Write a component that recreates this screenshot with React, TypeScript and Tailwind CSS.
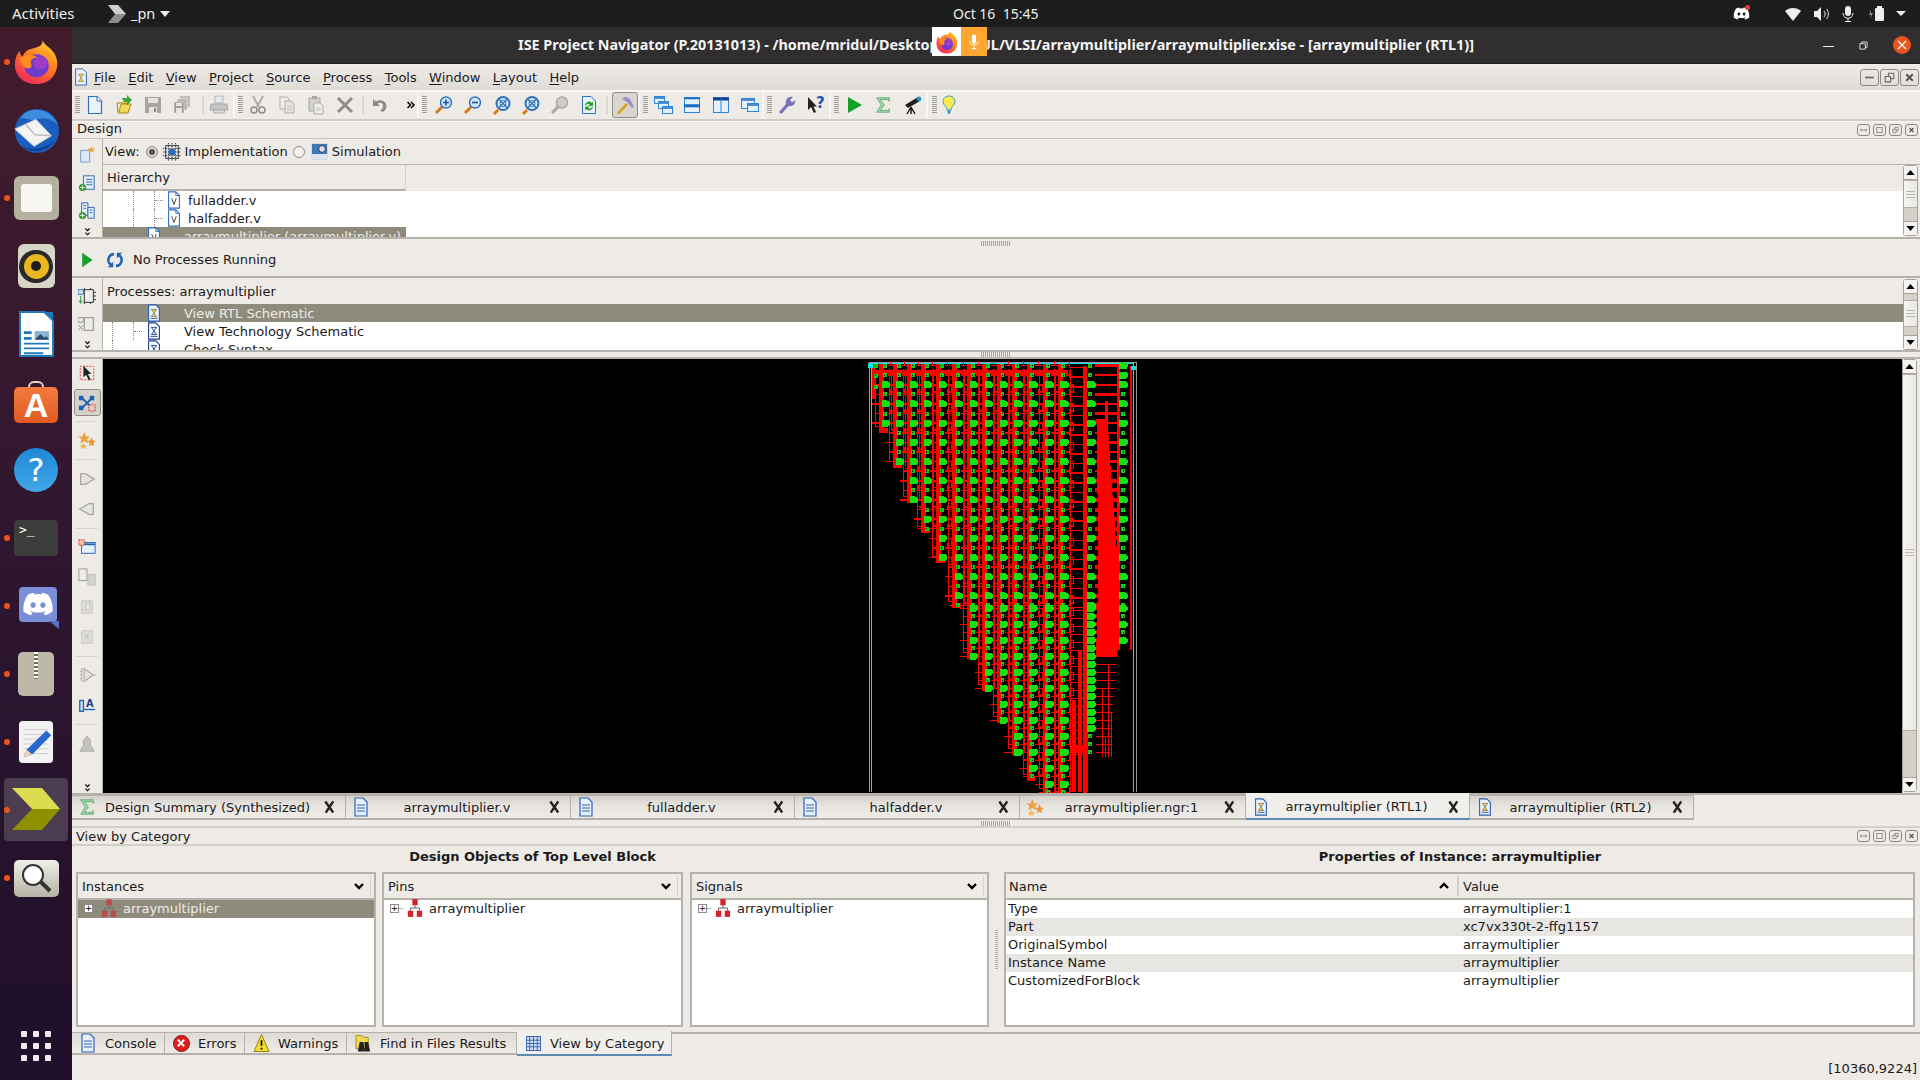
import React from "react";
import { FaDiscord } from "react-icons/fa";

/* ---------- schematic ---------- */
const GATE_COLS = [886, 900, 914, 928, 943, 959, 974, 989, 1004, 1019, 1034, 1050, 1065];
const COL_BOTTOM = [430, 465, 500, 530, 560, 605, 656, 688, 720, 752, 778, 800, 800];
const ROWS: number[] = [];
for (let i = 0; i < 26; i++) ROWS.push(365 + i * 9.6);
for (let k = 0; k < 24; k++) ROWS.push(608 + k * 8);

function BigGate({ x, y }: { x: number; y: number }) {
  return <path d={`M${x - 4} ${y - 3.5}h5q3.5 0 3.5 3.5t-3.5 3.5h-5z`} fill="#14e014" />;
}
function SmallGate({ x, y }: { x: number; y: number }) {
  return (
    <g>
      <rect x={x - 2} y={y - 2} width={4} height={4} fill="#14d014" />
      <rect x={x - 0.7} y={y - 0.7} width={1.4} height={1.4} fill="#002000" />
    </g>
  );
}

function Schematic() {
  const wires: string[] = [];
  const thin: string[] = [];
  const rungs: string[] = [];
  const heavy: string[] = [];
  const gates: React.ReactNode[] = [];

  GATE_COLS.forEach((x, c) => {
    const bottom = Math.min(COL_BOTTOM[c], 792);
    const rowsHere = ROWS.filter((y) => y <= bottom);
    wires.push(`M${x - 4} 363V${bottom}H${x + 2}`);
    thin.push(`M${x - 10} 368V${bottom - 4}H${x - 2}`);
    thin.push(`M${x + 6} 368V${bottom}`);
    rowsHere.forEach((y) => {
      const idx = ROWS.indexOf(y);
      const big = idx % 2 === 0 && idx >= 2;
      if (big) {
        thin.push(`M${x - 14} ${y}H${x - 4}M${x + 3} ${y}H${x + 9}V${y + 7}H${x + 5}`);
        gates.push(<BigGate key={`b${c}-${idx}`} x={x} y={y} />);
      } else {
        thin.push(`M${x - 10} ${y}H${x - 2}M${x + 2} ${y}H${x + 5}V${y - 5}`);
        gates.push(<SmallGate key={`s${c}-${idx}`} x={x - 1} y={y} />);
      }
    });
  });

  // first column of the triangle
  [365, 375, 386].forEach((y) => {
    gates.push(<SmallGate key={`l${y}`} x={876} y={y} />);
    thin.push(`M873 ${y}H882`);
  });

  // stage before the output ladder
  ROWS.forEach((y, idx) => {
    if (y > 757) return;
    const big = y > 600 ? y < 735 : idx % 2 === 0 && idx >= 2;
    thin.push(`M1070 ${y + 2}H1087`);
    if (big) gates.push(<BigGate key={`m${idx}`} x={1092} y={y} />);
    else gates.push(<SmallGate key={`m${idx}`} x={1091} y={y} />);
    if (y < 648) {
      (y > 480 ? heavy : rungs).push(`M1096 ${y}H1120`);
      gates.push(idx % 2 === 0 || idx < 2 ? <BigGate key={`o${idx}`} x={1124} y={y} /> : <SmallGate key={`o${idx}`} x={1124} y={y} />);
    } else {
      thin.push(`M1097 ${y}H${1118 - (y - 648) / 14}`);
      if (idx % 3 === 0) thin.push(`M${1100 + (idx % 5) * 3} ${y}V757`);
    }
  });

  return (
    <svg viewBox="103 359 1800 433" className="w-full h-full block" shapeRendering="crispEdges">
      <path d="M869.5 361V792M1137.5 361V792M869 361.5H1138" stroke="#9a9a9a" fill="none" />
      <path d="M871.5 363V792M1134.5 363V792M871 362.5H1135" stroke="#00e5e5" fill="none" />
      <path d={thin.join("")} stroke="#ff0000" strokeWidth={1.5} fill="none" />
      <path d={rungs.join("")} stroke="#ff0000" strokeWidth={2.4} fill="none" />
      <path d={heavy.join("")} stroke="#ff0000" strokeWidth={4} fill="none" />
      <path d={wires.join("")} stroke="#ff0000" strokeWidth={5} fill="none" />
      <g fill="#ff0000">
        <rect x={873} y={369} width={196} height={4} />
        <rect x={872} y={365} width={3} height={33} />
        <rect x={1084} y={365} width={4} height={428} />
        <rect x={1118} y={365} width={3} height={285} />
        <rect x={1131} y={365} width={2} height={285} />
        <path d="M1097 418H1108L1112 480L1117 545L1121 600V650H1097L1099 560Z" />
        <path d="M1106 400h3v60h-3zM1097 640h21v16h-21z" />
        <rect x={1073} y={700} width={4} height={92} />
        <rect x={1079} y={650} width={4} height={142} />
        <rect x={1071} y={745} width={16} height={8} />
        <rect x={1086} y={650} width={3} height={142} />
      </g>
      {gates}
      <rect x={868} y={362} width={5} height={5} fill="#00e5e5" />
      <rect x={1132} y={365} width={5} height={4} fill="#00e5e5" />
    </svg>
  );
}

/* ---------- small icons ---------- */
function Ic({ children, className = "w-5 h-5" }: { children: React.ReactNode; className?: string }) {
  return (
    <svg viewBox="0 0 20 20" className={`${className} shrink-0`}>
      {children}
    </svg>
  );
}

const IcNew = () => (
  <Ic>
    <path d="M3.5 1.5H12L16.5 6V18.5H3.5Z" fill="#eaf3fc" stroke="#2e6fc0" strokeWidth="1.2" />
    <path d="M12 1.5V6H16.5" fill="#fff" stroke="#2e6fc0" />
  </Ic>
);
const IcOpen = () => (
  <Ic>
    <path d="M3 8L4 18H14L17 9H7L5 17" fill="#f4d758" stroke="#a38a20" />
    <path d="M3 8H8L14 9V6" fill="#ecc53e" stroke="#a38a20" />
    <path d="M8 3H13V0L18 5L13 10V7H10Z" fill="#3aa83a" />
  </Ic>
);
const IcSave = () => (
  <Ic>
    <path d="M2 2H18V18H2Z" fill="#a9a6a1" />
    <path d="M5 3H15V8H5Z" fill="#e6e4e1" />
    <path d="M6 12H14V18H6Z" fill="#e6e4e1" />
    <path d="M11 13H13V17H11Z" fill="#8c8985" />
  </Ic>
);
const IcSaveAll = () => (
  <Ic>
    <path d="M8 1H18V12H8Z" fill="#c2bfba" />
    <path d="M5 4H15V15H5Z" fill="#b5b2ad" stroke="#eeebe7" strokeWidth=".5" />
    <path d="M2 7H12V18H2Z" fill="#a09d98" stroke="#eeebe7" strokeWidth=".5" />
    <path d="M4 13H10V18H4Z" fill="#e6e4e1" />
    <path d="M4 8H10V11H4Z" fill="#e6e4e1" />
  </Ic>
);
const IcPrint = () => (
  <Ic>
    <path d="M6 1H14V8H6Z" fill="#e3e7ee" stroke="#b3b6bb" />
    <path d="M2 9H18L19 15H1Z" fill="#c4c4c4" stroke="#a8a8a8" />
    <path d="M4 15H16L15 18H5Z" fill="#ddd" stroke="#aaa" />
  </Ic>
);
const IcCut = () => (
  <Ic>
    <path d="M5 1L11 12M15 1L9 12" stroke="#aeaca7" strokeWidth="2" fill="none" />
    <circle cx="6" cy="15" r="3" fill="none" stroke="#8e8c88" strokeWidth="1.5" />
    <circle cx="14" cy="15" r="3" fill="none" stroke="#8e8c88" strokeWidth="1.5" />
  </Ic>
);
const IcCopy = () => (
  <Ic>
    <path d="M3 2H10L12 4V14H3Z" fill="#eee" stroke="#b0aeaa" />
    <path d="M8 6H14L17 9V18H8Z" fill="#e8e6e3" stroke="#aeaca8" />
    <path d="M10 11H15M10 13H15M10 15H15" stroke="#c5c3bf" />
  </Ic>
);
const IcPaste = () => (
  <Ic>
    <path d="M3 3H14V16H3Z" fill="#d3d1cd" stroke="#a8a6a2" />
    <path d="M6 1H11V4H6Z" fill="#aaa8a4" />
    <path d="M8 8H14L17 11V19H8Z" fill="#eee" stroke="#aeaca8" />
    <path d="M10 13H15M10 15H15" stroke="#c5c3bf" />
  </Ic>
);
const IcDelete = () => (
  <Ic>
    <path d="M3 3L17 17M17 3L3 17" stroke="#8f8d89" strokeWidth="3" />
  </Ic>
);
const IcUndo = () => (
  <Ic>
    <path d="M4 4V11H11L8.5 8.5C11 7 14 8 14 11C14 13 13 14 11 15.5L14 17C17 15 18 12 17 9C15.5 5 10.5 4 7 6.5Z" fill="#8d8b87" />
  </Ic>
);
const IcMore = () => (
  <Ic className="w-[10px] h-[10px]">
    <path d="M3 4L9 10L3 16M10 4L16 10L10 16" stroke="#000" strokeWidth="3" fill="none" />
  </Ic>
);
function IcZoom({ mark, gray }: { mark?: string; gray?: boolean }) {
  return (
    <Ic>
      <path d="M8 12L2 18" stroke={gray ? "#a8a6a2" : "#d57a1e"} strokeWidth="3" />
      <circle cx="12" cy="7.5" r="5.5" fill={gray ? "#cfcdc9" : "#cfe3f8"} stroke={gray ? "#a8a6a2" : "#2e72bd"} strokeWidth="1.4" />
      {mark === "+" && <path d="M9 7.5H15M12 4.5V10.5" stroke="#1c56a0" strokeWidth="1.6" />}
      {mark === "-" && <path d="M9 7.5H15" stroke="#1c56a0" strokeWidth="1.6" />}
    </Ic>
  );
}
const IcFit = () => (
  <Ic>
    <circle cx="11" cy="8.5" r="6.5" fill="#d8e8f9" stroke="#2e72bd" strokeWidth="2" />
    <circle cx="11" cy="8.5" r="3" fill="#fff" stroke="#2e72bd" />
    <path d="M6.5 4L15.5 13M15.5 4L6.5 13" stroke="#2e72bd" strokeWidth="1.4" />
    <path d="M2 19L6 15" stroke="#d57a1e" strokeWidth="3" />
  </Ic>
);
const IcRefreshDoc = () => (
  <Ic>
    <path d="M3.5 1.5H12L16.5 6V18.5H3.5Z" fill="#eaf3fc" stroke="#2e6fc0" />
    <path d="M6 10A4 4 0 0 1 13 8L14 6V11H9L11 9.5A2.5 2.5 0 0 0 7 10.5ZM14 12A4 4 0 0 1 7 14L6 16V11.5H11L9 13A2.5 2.5 0 0 0 13 12Z" fill="#2aa02a" />
  </Ic>
);
const IcHammer = () => (
  <Ic>
    <path d="M2 18L11 8L13 10L4 19.5Z" fill="#dca01e" />
    <path d="M7 4C10 1 13 2 15 4L19 12L17 13L12 7Z" fill="#9a8fc4" />
  </Ic>
);
const IcWinCascade = () => (
  <Ic>
    <g fill="#e4f0fc" stroke="#2e86d4">
      <rect x="1.5" y="1.5" width="10" height="7" />
      <rect x="5.5" y="6.5" width="10" height="7" />
      <rect x="9.5" y="11.5" width="10" height="7" />
    </g>
    <path d="M2 3H11M6 8H15M10 13H19" stroke="#1a6ec0" strokeWidth="1.6" />
  </Ic>
);
const IcWinH = () => (
  <Ic>
    <rect x="2.5" y="2.5" width="15" height="15" fill="#e4f0fc" stroke="#2e86d4" />
    <path d="M2 3.5H18M2 10H18M2 11.5H18" stroke="#1a6ec0" strokeWidth="1.4" />
  </Ic>
);
const IcWinV = () => (
  <Ic>
    <rect x="2.5" y="2.5" width="15" height="15" fill="#e4f0fc" stroke="#2e86d4" />
    <path d="M2 4H18" stroke="#123f94" strokeWidth="3" />
    <path d="M10 4V18" stroke="#2e86d4" />
  </Ic>
);
const IcWinTile = () => (
  <Ic>
    <g fill="#e4f0fc" stroke="#2e86d4">
      <rect x="1.5" y="3.5" width="13" height="10" />
      <rect x="7.5" y="8.5" width="11" height="8" />
    </g>
    <path d="M2 5H14M8 10H18" stroke="#1a6ec0" strokeWidth="1.6" />
  </Ic>
);
const IcWrench = () => (
  <Ic>
    <path d="M2 17L9 9C8 5 11 1 16 2L13 5L15 7.5L18 5C19 9 15 12 11.5 11L4.5 19Z" fill="#7a72bd" />
  </Ic>
);
const IcHelp = () => (
  <Ic>
    <path d="M2 2V15L5 12L8 18L10 17L7.5 11.5H11Z" fill="#222" />
    <text x="10" y="13" fontSize="15" fontWeight="700" fill="#1d55b0" fontFamily="DejaVu Sans">?</text>
  </Ic>
);
const IcPlay = () => (
  <Ic>
    <path d="M4 2L18 10L4 18Z" fill="#14a02a" />
  </Ic>
);
const IcSigma = () => (
  <Ic className="w-[18px] h-[18px]">
    <path d="M3 2H17V6L15.5 4H7L11.5 10L7 16H15.5L17 14V18H3L8 10Z" fill="#a6dbae" stroke="#3aa05a" strokeWidth=".8" />
  </Ic>
);
const IcScope = () => (
  <Ic>
    <path d="M3 10L16 2L18 6L6 13Z" fill="#1d1d1d" />
    <circle cx="17" cy="4" r="2.4" fill="#2a8fc8" />
    <path d="M9 12L5 19M9 12V19M9 12L13 19" stroke="#111" strokeWidth="1.4" />
  </Ic>
);
const IcBulb = () => (
  <Ic>
    <path d="M10 1C5 1 4 5 4 7C4 10 8 11 8 15H12C12 11 16 10 16 7C16 5 15 1 10 1Z" fill="#fbe84e" stroke="#3c9fd8" />
    <path d="M8 15H12L11 19H9Z" fill="#3c9fd8" />
  </Ic>
);
const IcDocV = () => (
  <svg viewBox="0 0 14 20" className="w-[14px] h-[18px] shrink-0">
    <path d="M1 1H9L13 5V19H1Z" fill="#fff" stroke="#2e6fc0" strokeWidth="1.2" />
    <path d="M9 1V5H13" fill="none" stroke="#2e6fc0" />
    <path d="M4.5 8L7 15L9.5 8" fill="none" stroke="#333" />
  </svg>
);
const IcSchem = () => (
  <svg viewBox="0 0 14 20" className="w-[14px] h-[18px] shrink-0">
    <path d="M1 1H9L13 5V19H1Z" fill="#e9f1fb" stroke="#2a5fb0" strokeWidth="1.2" />
    <path d="M4 6H10L7 10L10 14H4L7 10Z" fill="#f4d230" stroke="#444" strokeWidth=".6" />
    <path d="M3 16H11" stroke="#2a5fb0" />
  </svg>
);
const IcTech = () => (
  <svg viewBox="0 0 14 20" className="w-[14px] h-[18px] shrink-0">
    <path d="M1 1H9L13 5V19H1Z" fill="#fff" stroke="#1a3d94" strokeWidth="1.2" />
    <path d="M4 6H10L7 10L10 14H4L7 10Z" fill="#dfe8f5" stroke="#1a3d94" />
    <path d="M3 16H11" stroke="#1a3d94" />
  </svg>
);
const IcDoc = () => (
  <svg viewBox="0 0 14 20" className="w-[14px] h-[20px] shrink-0">
    <path d="M1 1H9L13 5V19H1Z" fill="#e6effa" stroke="#2e62b8" strokeWidth="1.2" />
    <path d="M3 8H11M3 11H11M3 14H11" stroke="#2e62b8" />
  </svg>
);
const IcStars = () => (
  <Ic className="w-[18px] h-[18px]">
    <path d="M7 1L9 6L14 6L10 9L11.5 14L7 11L2.5 14L4 9L0 6L5 6Z" fill="#f2a23c" />
    <path d="M15 7L16.5 10.5L20 11L17 13L18 17L15 15L12 17L13 13L10 11L13.5 10.5Z" fill="#f0902e" />
    <path d="M6 13L7.2 15.5L10 16L8 18L8.6 20L6 18.8L3.4 20L4 18L2 16L4.8 15.5Z" fill="#f6b454" />
  </Ic>
);
const IcModule = ({ faded }: { faded?: boolean }) => (
  <svg viewBox="0 0 18 22" className={`w-4 h-5 shrink-0 ${faded ? "opacity-60" : ""}`}>
    <rect x="6" y="1" width="6" height="7" fill="#d8212c" />
    <rect x="1" y="14" width="6" height="7" fill="#d8212c" />
    <rect x="11" y="14" width="6" height="7" fill="#d8212c" />
    <path d="M9 8V11M4 14V11H14V14" stroke="#555" fill="none" />
  </svg>
);
const TabX = () => (
  <svg viewBox="0 0 14 14" className="w-[13px] h-[14px] shrink-0">
    <path d="M2.5 1L11 13M11 1L3 13" stroke="#222" strokeWidth="2.6" />
  </svg>
);
const Chev = ({ up }: { up?: boolean }) => (
  <svg viewBox="0 0 10 8" className="w-[10px] h-2 shrink-0">
    <path d={up ? "M1 6L5 2L9 6" : "M1 2L5 6L9 2"} stroke="#000" strokeWidth="2.4" fill="none" />
  </svg>
);
const DblChev = () => (
  <svg viewBox="0 0 10 12" className="w-[7px] h-[10px] shrink-0">
    <path d="M2 1L5 4L8 1M2 7L5 10L8 7" stroke="#000" strokeWidth="1.6" fill="none" />
  </svg>
);
const Plus = () => (
  <span className="w-[9px] h-[9px] border border-[#8d8d8d] bg-white flex items-center justify-center text-[9px] leading-none text-black shrink-0">+</span>
);

function WinBtn({ kind, big }: { kind: string; big?: boolean }) {
  return (
    <span className={`${big ? "w-[19px] h-[17px]" : "w-[13px] h-[12px]"} border border-[#8b8982] rounded-[3px] flex items-center justify-center shrink-0`}>
      <svg viewBox="0 0 12 12" className="w-full h-full p-[1px]">
        {kind === "min" && <path d="M2 6H10" stroke="#6a6862" strokeWidth="1.6" />}
        {kind === "max" && <rect x="2" y="2" width="8" height="8" fill="none" stroke="#6a6862" />}
        {kind === "restore" && <path d="M2 5H7V10H2ZM5 5V2H10V7H7" fill="none" stroke="#6a6862" />}
        {kind === "close" && <path d="M3 3L9 9M9 3L3 9" stroke="#55534e" strokeWidth="1.8" />}
        {kind === "fit" && <path d="M1 6H11M3 4L1 6L3 8M9 4L11 6L9 8" fill="none" stroke="#6a6862" />}
      </svg>
    </span>
  );
}

function PanelBtns() {
  return (
    <div className="flex gap-[3px] mr-[2px]">
      <WinBtn kind="fit" />
      <WinBtn kind="max" />
      <WinBtn kind="restore" />
      <WinBtn kind="close" />
    </div>
  );
}

const Grip = () => (
  <span className="w-[5px] h-[18px] shrink-0 bg-[repeating-linear-gradient(180deg,#9f9c96_0,#9f9c96_1px,transparent_1px,transparent_2px)]" />
);
const SplitGrip = () => (
  <span className="block w-[30px] h-[5px] bg-[repeating-linear-gradient(90deg,#a9a6a0_0,#a9a6a0_1px,transparent_1px,transparent_2px)]" />
);

function TbGroup({ w, children }: { w: string; children: React.ReactNode }) {
  return <div className={`${w} h-full flex items-center pl-[3px] border-r-2 border-[#f7f6f4] shrink-0`}>{children}</div>;
}
const Slot = ({ children }: { children: React.ReactNode }) => (
  <span className="w-[29px] h-full flex items-center justify-center shrink-0">{children}</span>
);
const TbSep = () => <span className="w-[2px] h-[18px] bg-[#dcd9d4] shrink-0" />;

function Toolbar() {
  return (
    <div className="h-[31px] flex border-t-2 border-[#f8f7f5] border-b-2 border-b-[#cfccc6] pb-px">
      <TbGroup w="w-[163px]">
        <Grip />
        <Slot><IcNew /></Slot>
        <Slot><IcOpen /></Slot>
        <Slot><IcSave /></Slot>
        <Slot><IcSaveAll /></Slot>
        <span className="w-[6px]" />
        <TbSep />
        <Slot><IcPrint /></Slot>
      </TbGroup>
      <TbGroup w="w-[184px]">
        <Grip />
        <Slot><IcCut /></Slot>
        <Slot><IcCopy /></Slot>
        <Slot><IcPaste /></Slot>
        <Slot><IcDelete /></Slot>
        <span className="w-[3px]" />
        <TbSep />
        <Slot><IcUndo /></Slot>
        <span className="flex-1 flex justify-end pr-[1px]"><IcMore /></span>
      </TbGroup>
      <TbGroup w="w-[221px]">
        <Grip />
        <span className="w-[2px]" />
        <Slot><IcZoom mark="+" /></Slot>
        <Slot><IcZoom mark="-" /></Slot>
        <Slot><IcFit /></Slot>
        <Slot><IcFit /></Slot>
        <Slot><IcZoom gray /></Slot>
        <Slot><IcRefreshDoc /></Slot>
        <span className="w-[3px]" />
        <TbSep />
        <span className="w-[4px]" />
        <span className="w-[26px] h-[26px] bg-[#d9d6d0] border border-[#8f8c86] rounded-[3px] flex items-center justify-center shrink-0"><IcHammer /></span>
      </TbGroup>
      <TbGroup w="w-[124px]">
        <Grip />
        <Slot><IcWinCascade /></Slot>
        <Slot><IcWinH /></Slot>
        <Slot><IcWinV /></Slot>
        <Slot><IcWinTile /></Slot>
      </TbGroup>
      <TbGroup w="w-[67px]">
        <Grip />
        <Slot><IcWrench /></Slot>
        <Slot><IcHelp /></Slot>
      </TbGroup>
      <TbGroup w="w-[97px]">
        <Grip />
        <span className="w-[1px]" />
        <Slot><IcPlay /></Slot>
        <Slot><IcSigma /></Slot>
        <Slot><IcScope /></Slot>
      </TbGroup>
      <div className="h-full flex items-center pl-[4px]">
        <Grip />
        <span className="w-[2px]" />
        <span className="w-[20px] flex justify-center"><IcBulb /></span>
      </div>
    </div>
  );
}

/* ---------- scrollbars ---------- */
const Arrow = ({ up }: { up?: boolean }) => (
  <svg viewBox="0 0 10 6" className="w-[9px] h-[5px]">
    <path d={up ? "M5 0L10 6H0Z" : "M0 0H10L5 6Z"} fill="#000" />
  </svg>
);
function Scrollbar({ before, thumb, after }: { before: string; thumb: string; after: string }) {
  return (
    <div className="w-[15px] shrink-0 h-full flex flex-col border border-[#a5a29b] rounded-[3px] bg-[#d6d0c8]">
      <div className="h-[14px] bg-[#f4f3f1] border-b border-[#a5a29b] flex items-center justify-center shrink-0"><Arrow up /></div>
      <div className={before} />
      <div className={`${thumb} bg-gradient-to-r from-[#f6f5f3] to-[#e9e7e3] border-y border-[#b3b0a9] flex flex-col gap-[2px] items-center justify-center shrink-0`}>
        <span className="w-[9px] h-px bg-[#bcb9b3]" />
        <span className="w-[9px] h-px bg-[#bcb9b3]" />
        <span className="w-[9px] h-px bg-[#bcb9b3]" />
      </div>
      <div className={after} />
      <div className="h-[14px] bg-[#f4f3f1] border-t border-[#a5a29b] flex items-center justify-center shrink-0"><Arrow /></div>
    </div>
  );
}

/* ---------- dock ---------- */
const DotLine = ({ ml = "ml-0" }: { ml?: string }) => (
  <span className={`${ml} h-full border-l border-dotted border-[#8e8e8e] shrink-0`} />
);
const DotH = ({ w }: { w: string }) => <span className={`${w} border-t border-dotted border-[#8e8e8e] shrink-0`} />;

function Firefox({ size = "w-[45px] h-[46px]" }: { size?: string }) {
  return (
    <svg viewBox="0 0 46 50" className={`${size} shrink-0`} preserveAspectRatio="none">
      <defs>
        <linearGradient id="ffg" x1="0.8" y1="0" x2="0.2" y2="1">
          <stop offset="0" stopColor="#ffd02e" />
          <stop offset="0.45" stopColor="#ff7a22" />
          <stop offset="1" stopColor="#f0245e" />
        </linearGradient>
      </defs>
      <path d="M29 1C31 7 38 9 42 17C48 29 42 49 23 49C8 49 0 38 1 26C1.500 20 3 16 6 13C6 16 7 18 9 19C11 13 15 11 20 10C25 9 30 7 29 1Z" fill="url(#ffg)" />
      <circle cx="23" cy="29" r="12.500" fill="#6e3bd0" />
      <path d="M6 21C12 17 19 16 24 20C19 20 17 23 17 26C20 31 15 33 11 31C8 29 7 25 6 21Z" fill="#ff8c1e" />
      <circle cx="27" cy="26" r="7" fill="#a03cc8" />
    </svg>
  );
}

function DockSlot({ dot, active, children }: { dot?: boolean; active?: boolean; children: React.ReactNode }) {
  return (
    <div className="h-[68px] w-[72px] shrink-0 flex items-center justify-center relative">
      {active && <div className="absolute left-[4px] top-[2px] w-[64px] h-[63px] rounded-[4px] bg-[#4c3c50]" />}
      {dot && <span className="absolute left-[4px] top-[31px] w-[6px] h-[6px] rounded-full bg-[#e9541f]" />}
      <div className="relative flex items-center justify-center">{children}</div>
    </div>
  );
}

function Dock() {
  return (
    <div className="w-[72px] shrink-0 bg-gradient-to-b from-[#431c2c] via-[#2f1630] to-[#1f0f2a] flex flex-col">
      <div className="h-px" />
      <DockSlot dot><Firefox /></DockSlot>
      <DockSlot>
        <svg viewBox="0 0 48 50" className="w-[48px] h-[48px]">
          <circle cx="25" cy="26" r="23" fill="#1a5fc0" />
          <path d="M8 12C16 0 38 0 47 20C40 12 30 11 22 15Z" fill="#3e8ee0" />
          <path d="M2 24L24 14L40 31L22 42Z" fill="#f4f4f4" stroke="#d0d0d0" />
          <path d="M13 19L23 30L40 31" fill="none" stroke="#bbb" strokeWidth="1.5" />
          <path d="M9 42C18 49 34 50 44 36C34 44 20 47 9 42Z" fill="#0f3f90" />
        </svg>
      </DockSlot>
      <DockSlot dot>
        <div className="w-[45px] h-[44px] rounded-[6px] bg-[#b5b09f] flex items-center justify-center">
          <div className="w-[31px] h-[28px] rounded-[3px] bg-[#f7f6f3]" />
        </div>
      </DockSlot>
      <DockSlot>
        <div className="w-[37px] h-[44px] rounded-[6px] bg-[#d7d4c8] flex items-center justify-center">
          <div className="w-[34px] h-[33px] rounded-full bg-[#2a2a2a] flex items-center justify-center">
            <div className="w-[25px] h-[25px] rounded-full bg-[#eab81e] flex items-center justify-center">
              <div className="w-[10px] h-[10px] rounded-full bg-[#1c1c1c]" />
            </div>
          </div>
        </div>
      </DockSlot>
      <DockSlot>
        <svg viewBox="0 0 38 48" className="w-[37px] h-[46px]" preserveAspectRatio="none">
          <path d="M2 1H27L36 10V47H2Z" fill="#fff" stroke="#1e78b8" strokeWidth="2" />
          <path d="M27 1L36 1V10Z" fill="#1e78b8" />
          <path d="M6 21H14V24H6ZM6 27H14V30H6ZM6 33H32V35H6ZM6 38H32V40H6ZM6 43H26V45H6Z" fill="#1e78b8" />
          <path d="M17 21H32V30H17Z" fill="#89b4d4" />
          <path d="M17 30L23 24L27 28L29 26L32 30Z" fill="#2d4c70" />
        </svg>
      </DockSlot>
      <DockSlot>
        <div className="relative w-[44px] h-[42px] flex flex-col items-center">
          <div className="w-[16px] h-[6px] rounded-t-full border-2 border-b-0 border-[#e7d4bf] shrink-0" />
          <div className="w-full h-[36px] rounded-[5px] bg-gradient-to-b from-[#f47a3c] to-[#df5a22] flex items-center justify-center">
            <span className="text-white text-[34px] font-bold leading-none font-['Liberation_Sans']">A</span>
          </div>
        </div>
      </DockSlot>
      <DockSlot>
        <div className="w-[44px] h-[44px] rounded-full bg-gradient-to-b from-[#1e88d6] to-[#42a8e8] flex items-center justify-center">
          <span className="text-white text-[32px] leading-none font-['DejaVu_Sans']">?</span>
        </div>
      </DockSlot>
      <DockSlot dot>
        <div className="w-[44px] h-[36px] rounded-[4px] bg-[#3d3d3b] pl-[5px] pt-[1px] text-white text-[13px] leading-[18px] font-['DejaVu_Sans_Mono']">&gt;_</div>
      </DockSlot>
      <DockSlot dot>
        <div className="w-[38px] h-[35px] ml-[4px] mt-[-4px] rounded-[4px] bg-[#7b8fd8] flex items-center justify-center relative">
          <FaDiscord className="text-white w-[32px] h-[32px]" />
          <span className="absolute -right-[2px] -bottom-[7px] border-t-[8px] border-t-[#5a6fc0] border-l-[10px] border-l-transparent" />
        </div>
      </DockSlot>
      <DockSlot dot>
        <div className="w-[36px] h-[44px] rounded-[5px] bg-[#bdb8a8] flex justify-center">
          <div className="w-[4px] h-[27px] bg-[repeating-linear-gradient(180deg,#fff_0,#fff_2px,#6e6a5e_2px,#6e6a5e_4px)]" />
        </div>
      </DockSlot>
      <DockSlot dot>
        <svg viewBox="0 0 38 46" className="w-[36px] h-[44px]" preserveAspectRatio="none">
          <rect x="1" y="1" width="36" height="44" rx="4" fill="#f3f3f3" />
          <path d="M6 10H32M6 15H32M6 20H32M6 25H32M6 30H32M6 35H32" stroke="#cbcbcb" />
          <path d="M30 11L35 16L15 36L6 39L9 31Z" fill="#2a68d0" />
          <path d="M6 39L9 31L15 36Z" fill="#f3d6b0" />
        </svg>
      </DockSlot>
      <DockSlot dot active>
        <svg viewBox="0 0 48 42" className="w-[48px] h-[42px] mt-[-2px]">
          <path d="M0 0H30L48 21H20Z" fill="#dcdc50" />
          <path d="M20 21H48L30 42H0Z" fill="#8f9000" />
        </svg>
      </DockSlot>
      <DockSlot dot>
        <div className="w-[45px] h-[37px] rounded-[5px] bg-gradient-to-b from-[#efefe9] to-[#b6b3a5] flex items-center justify-center">
          <svg viewBox="0 0 32 32" className="w-[32px] h-[32px]">
            <circle cx="13" cy="13" r="10" fill="#fff" stroke="#333" strokeWidth="2" />
            <path d="M21 20L30 29" stroke="#333" strokeWidth="4" />
          </svg>
        </div>
      </DockSlot>
      <div className="flex-1 flex items-end justify-center pb-[19px]">
        <div className="grid grid-cols-3 gap-[6px]">
          {Array.from({ length: 9 }).map((_, i) => (
            <span key={i} className="w-[6px] h-[6px] rounded-[1px] bg-[#efefef]" />
          ))}
        </div>
      </div>
    </div>
  );
}

/* ---------- editor tabs ---------- */
function DocTab({ w, icon, label, active }: { w: string; icon: React.ReactNode; label: string; active?: boolean }) {
  return (
    <div
      className={`${w} shrink-0 flex items-center pl-[6px] pr-[9px] border-r border-[#b4b1aa] ${
        active
          ? "h-[27px] -mt-[2px] pt-[2px] bg-[#f1efec] border-b-2 border-b-[#5c88b4]"
          : "h-[25px] bg-gradient-to-b from-[#d5d2cc] via-[#e9e6e2] to-[#eeebe7] border-b-2 border-b-[#b4b1aa] border-t border-t-[#b4b1aa]"
      }`}
    >
      <span className="w-[18px] flex justify-center shrink-0">{icon}</span>
      <span className="flex-1 text-center whitespace-nowrap pr-[4px]">{label}</span>
      <TabX />
    </div>
  );
}

function BottomTab({ w, icon, label, active }: { w: string; icon: React.ReactNode; label: string; active?: boolean }) {
  return (
    <div
      className={`${w} shrink-0 flex items-center pl-[5px] border-r border-[#b4b1aa] ${
        active
          ? "h-[25px] -mt-[3px] pt-px bg-[#f1efec] border-b-2 border-b-[#5c88b4]"
          : "h-[23px] -mt-[2px] bg-gradient-to-b from-[#dfdcd7] to-[#eeebe7] border-b-2 border-b-[#b4b1aa] border-t border-t-[#b4b1aa]"
      }`}
    >
      <span className="w-[22px] flex justify-center shrink-0">{icon}</span>
      <span className="ml-[6px] whitespace-nowrap">{label}</span>
    </div>
  );
}

/* ---------- view by category panels ---------- */
function ListPanel({ w, title, selected }: { w: string; title: string; selected?: boolean }) {
  return (
    <div className={`${w} h-[155px] shrink-0 border-2 border-[#b5b2ab] bg-white flex flex-col`}>
      <div className="h-[26px] shrink-0 bg-[#eeebe7] border-b-2 border-[#b5b2ab] flex items-center pl-[4px] pr-[3px]">
        <span className="flex-1">{title}</span>
        <span className="w-[17px] border-r border-[#d5d2cc] h-[20px] flex items-center"><Chev /></span>
      </div>
      <div className={`h-[18px] flex items-center pl-[6px] pb-[2px] ${selected ? "bg-[#8f8b7c] text-[#eeebe7]" : ""}`}>
        <Plus />
        <DotH w="w-[4px]" />
        <span className="ml-[2px] w-[20px] flex justify-center"><IcModule faded={selected} /></span>
        <span className="ml-[4px]">arraymultiplier</span>
      </div>
    </div>
  );
}

const PROPS = [
  ["Type", "arraymultiplier:1"],
  ["Part", "xc7vx330t-2-ffg1157"],
  ["OriginalSymbol", "arraymultiplier"],
  ["Instance Name", "arraymultiplier"],
  ["CustomizedForBlock", "arraymultiplier"],
];

function PropsPanel() {
  return (
    <div className="h-[155px] border-2 border-[#b5b2ab] bg-white flex flex-col">
      <div className="h-[26px] shrink-0 bg-[#eeebe7] border-b-2 border-[#b5b2ab] flex items-center">
        <span className="w-[453px] pl-[3px] flex items-center h-[20px] border-r-2 border-[#d5d2cc] shrink-0">
          <span className="flex-1">Name</span>
          <span className="mr-[8px]"><Chev up /></span>
        </span>
        <span className="pl-[4px]">Value</span>
      </div>
      {PROPS.map(([k, v], i) => (
        <div key={k} className={`h-[18px] flex items-center shrink-0 pb-[2px] ${i % 2 === 1 ? "bg-[#e8e6e3]" : ""}`}>
          <span className="w-[454px] pl-[2px] shrink-0">{k}</span>
          <span className="pl-[3px]">{v}</span>
        </div>
      ))}
    </div>
  );
}

/* ---------- left tool strip ---------- */
const StripSep = () => <span className="w-[22px] h-px bg-[#d7d4ce]" />;
const Strip = ({ children }: { children: React.ReactNode }) => (
  <div className="w-[30px] shrink-0 h-full flex flex-col items-center">{children}</div>
);
const Sp = ({ h }: { h: string }) => <span className={`${h} block shrink-0`} />;
const StripIcon = ({ children, gray }: { children: React.ReactNode; gray?: boolean }) => (
  <svg viewBox="0 0 20 20" className={`w-[18px] h-[18px] shrink-0 ${gray ? "opacity-50" : ""}`}>{children}</svg>
);

function CanvasStrip() {
  return (
    <Strip>
      <Sp h="h-[5px]" />
      <StripIcon>
        <rect x="2.500" y="2.500" width="15" height="15" fill="none" stroke="#e02020" strokeDasharray="2 1.500" />
        <path d="M6 2V15L9 12L12 18L14 17L11 11H15Z" fill="#222" />
      </StripIcon>
      <Sp h="h-[7px]" />
      <div className="w-[27px] h-[27px] bg-[#d5d2cc] border border-[#8f8c86] rounded-[3px] flex items-center justify-center shrink-0">
        <StripIcon>
          <path d="M5 5L10 10L5 15M15 5L10 10M10 10L14 14" stroke="#1a62b8" strokeWidth="2" fill="none" />
          <rect x="1" y="2" width="5" height="5" fill="#1a62b8" />
          <rect x="13" y="2" width="5" height="5" fill="#1a62b8" />
          <rect x="1" y="13" width="5" height="5" fill="#1a62b8" />
          <rect x="12" y="12" width="7" height="7" fill="#d5d2cc" stroke="#e02020" strokeDasharray="2 1" />
        </StripIcon>
      </div>
      <Sp h="h-[5px]" />
      <StripSep />
      <Sp h="h-[9px]" />
      <IcStars />
      <Sp h="h-[10px]" />
      <StripSep />
      <Sp h="h-[10px]" />
      <StripIcon gray><path d="M3 4H8L18 10L8 16H3Z" fill="#ddd" stroke="#666" strokeWidth="1.500" /></StripIcon>
      <Sp h="h-[12px]" />
      <StripIcon gray><path d="M17 4H12L2 10L12 16H17Z" fill="#ddd" stroke="#666" strokeWidth="1.500" /></StripIcon>
      <Sp h="h-[10px]" />
      <StripSep />
      <Sp h="h-[9px]" />
      <StripIcon>
        <rect x="4" y="5" width="15" height="12" fill="#e4f0fc" stroke="#1a62b8" />
        <path d="M4 7H19" stroke="#1a62b8" strokeWidth="2" />
        <rect x="1" y="2" width="6" height="6" fill="#f4c4a0" stroke="#e02020" strokeDasharray="1.500 1" />
      </StripIcon>
      <Sp h="h-[12px]" />
      <StripIcon gray>
        <rect x="1" y="1" width="9" height="13" fill="#eee" stroke="#444" />
        <rect x="11" y="7" width="8" height="12" fill="#bbb" stroke="#888" />
      </StripIcon>
      <Sp h="h-[12px]" />
      <StripIcon gray><rect x="4" y="3" width="12" height="14" fill="#ccc" stroke="#aaa" /><rect x="9" y="6" width="4" height="7" fill="#eee" stroke="#999" /></StripIcon>
      <Sp h="h-[12px]" />
      <StripIcon gray><rect x="4" y="3" width="12" height="14" fill="#ccc" stroke="#aaa" /><path d="M8 7L12 12M12 7L8 12" stroke="#888" /></StripIcon>
      <Sp h="h-[10px]" />
      <StripSep />
      <Sp h="h-[9px]" />
      <StripIcon gray><path d="M7 3V17L17 10Z" fill="#ddd" stroke="#666" strokeWidth="1.200" /><path d="M2 6H7M2 10H7M2 14H7M17 10H20" stroke="#666" /><rect x="4" y="3" width="3" height="14" fill="#ccc" stroke="#888" /></StripIcon>
      <Sp h="h-[12px]" />
      <StripIcon>
        <rect x="2" y="5" width="4" height="12" fill="#d5e8fa" stroke="#1a62b8" strokeWidth="1.500" />
        <path d="M6 15H19" stroke="#1a62b8" strokeWidth="1.500" />
        <text x="9" y="12" fontSize="11" fontWeight="700" fill="#1a3d94" fontFamily="DejaVu Sans">A</text>
      </StripIcon>
      <Sp h="h-[10px]" />
      <StripSep />
      <Sp h="h-[10px]" />
      <StripIcon gray><path d="M10 1L14 6V12L18 18H2L6 12V6Z" fill="#999" stroke="#666" /></StripIcon>
      <div className="flex-1" />
      <DblChev />
    </Strip>
  );
}

/* ---------- app ---------- */
export default function App() {
  return (
    <div className="w-[1920px] h-[1080px] overflow-hidden flex flex-col font-['DejaVu_Sans',sans-serif] text-[13px] leading-none text-[#1a1a1a] bg-[#eeebe7]">
      {/* gnome top bar */}
      <div className="h-[27px] shrink-0 bg-[#1d1d1d] flex items-center text-[#ededed] text-[14.5px] font-['Noto_Sans',sans-serif] relative">
        <span className="ml-[12px] w-[96px] text-[15px]">Activities</span>
        <svg viewBox="0 0 18 18" className="w-[18px] h-[18px]">
          <path d="M0 0H10L18 9H7Z" fill="#cfcfcf" />
          <path d="M7 9H18L10 18H0Z" fill="#8c8c8c" />
        </svg>
        <span className="ml-[5px]">_pn</span>
        <span className="ml-[5px] border-x-[5px] border-x-transparent border-t-[6px] border-t-[#ededed]" />
        <span className="absolute left-[953px] text-[14px] whitespace-pre">Oct 16  15:45</span>
        <div className="ml-auto flex items-center mr-[14px]">
          <span className="relative mr-[35px]">
            <FaDiscord className="w-[17px] h-[17px] text-white" />
            <span className="absolute right-0 top-0 w-[5px] h-[5px] rounded-full bg-[#e63a3a]" />
          </span>
          <svg viewBox="0 0 16 14" className="w-[16px] h-[14px] mr-[13px]"><path d="M0 4C4 0 12 0 16 4L8 14Z" fill="#eee" /></svg>
          <svg viewBox="0 0 16 14" className="w-[16px] h-[14px] mr-[12px]"><path d="M0 4H3L7 0V14L3 10H0Z" fill="#eee" /><path d="M10 4C11.500 6 11.500 8 10 10M12.500 2C15 5 15 9 12.500 12" stroke="#eee" fill="none" /></svg>
          <svg viewBox="0 0 12 16" className="w-[12px] h-[16px] mr-[15px]"><rect x="3" y="0" width="6" height="10" rx="3" fill="#eee" /><path d="M1 7C1 14 11 14 11 7M6 12V16M3 15.500H9" stroke="#eee" fill="none" /></svg>
          <svg viewBox="0 0 16 16" className="w-[16px] h-[16px] mr-[11px]"><path d="M2 4L0 9H2L1 13L4 7H2Z" fill="#888" /><rect x="6" y="2" width="9" height="13" rx="1" fill="#eee" /><rect x="8" y="0" width="5" height="2" fill="#eee" /></svg>
          <span className="border-x-[5px] border-x-transparent border-t-[5px] border-t-[#ededed]" />
        </div>
      </div>

      <div className="flex-1 flex min-h-0">
        <Dock />
        <div className="flex-1 flex flex-col min-w-0">
          {/* window title */}
          <div className="h-[37px] shrink-0 bg-[#302e2f] border-b border-[#1e1d1d] pt-px flex items-center justify-center relative text-[#f4f4f4] font-bold text-[14.4px] font-['Noto_Sans',sans-serif] whitespace-nowrap">
            ISE Project Navigator (P.20131013) - /home/mridul/Desktop/MODUL/VLSI/arraymultiplier/arraymultiplier.xise - [arraymultiplier (RTL1)]
            <div className="absolute left-[860px] top-0 h-[29px] flex">
              <div className="w-[29px] h-full bg-white flex items-center justify-center"><Firefox size="w-[22px] h-[24px]" /></div>
              <div className="w-[26px] h-full bg-[#fda732] flex items-center justify-center">
                <svg viewBox="0 0 12 18" className="w-[10px] h-[16px]"><rect x="3.500" y="0" width="5" height="11" rx="2.500" fill="#fff" /><path d="M1 8C1 14 11 14 11 8M6 13V17M3 17H9" stroke="#fff" strokeWidth="1.200" fill="none" /></svg>
              </div>
            </div>
            <div className="absolute right-0 top-0 h-full flex items-center">
              <span className="w-[11px] h-[1.500px] bg-[#e8e8e8] mr-[25px] mt-[3px]" />
              <svg viewBox="0 0 10 10" className="w-[9px] h-[9px] mr-[25px]"><path d="M1 3H7V9H1ZM3 3V1H9V7H7" fill="none" stroke="#e8e8e8" /></svg>
              <span className="w-[18px] h-[18px] rounded-full bg-[#e9541f] mr-[9px] flex items-center justify-center">
                <svg viewBox="0 0 10 10" className="w-[10px] h-[10px]"><path d="M1 1L9 9M9 1L1 9" stroke="#fff" strokeWidth="1.200" /></svg>
              </span>
            </div>
          </div>

          {/* menu */}
          <div className="h-[26px] shrink-0 bg-gradient-to-b from-[#efece8] to-[#dfdcd8] flex items-center pl-[2px]">
            <svg viewBox="0 0 14 20" className="w-[14px] h-[18px] shrink-0">
              <path d="M1 1H9L13 5V19H1Z" fill="#e9f1fb" stroke="#2a5fb0" />
              <path d="M4 7H10L7 11L10 15H4L7 11Z" fill="#f4d230" stroke="#555" strokeWidth=".5" />
            </svg>
            <div className="flex gap-[12.4px] ml-[6px]">
              {["File", "Edit", "View", "Project", "Source", "Process", "Tools", "Window", "Layout", "Help"].map((m) => (
                <span key={m}>
                  <span className="underline underline-offset-2">{m[0]}</span>
                  {m.slice(1)}
                </span>
              ))}
            </div>
            <div className="ml-auto flex gap-[1px] mr-[1px]">
              <WinBtn kind="min" big />
              <WinBtn kind="restore" big />
              <WinBtn kind="close" big />
            </div>
          </div>

          <Toolbar />

          {/* design header */}
          <div className="h-[18px] shrink-0 flex items-center justify-between pl-[5px] border-y border-t-[#f8f7f5] border-b-[#c8c5bf]">
            <span className="-mt-[3px]">Design</span>
            <PanelBtns />
          </div>

          {/* hierarchy section */}
          <div className="h-[100px] shrink-0 flex border-b-2 border-[#b5b2ab]">
            <Strip>
              <Sp h="h-[6px]" />
              <StripIcon>
                <path d="M3 6H13V19H3Z" fill="#dbe8f6" stroke="#6b93c4" />
                <path d="M15 1L16 4L19 4L17 6L18 9L15 7L12 9L13 6L11 4L14 4Z" fill="#f2a23c" />
              </StripIcon>
              <Sp h="h-[11px]" />
              <StripIcon>
                <path d="M6 2H18V17H6Z" fill="#e4eefa" stroke="#2a5fb0" />
                <path d="M9 6H16M9 9H16M9 12H16" stroke="#2a5fb0" />
                <circle cx="5" cy="15" r="4" fill="#2aa02a" />
                <path d="M2.500 15H7.500M5 12.500V17.500" stroke="#fff" />
              </StripIcon>
              <Sp h="h-[10px]" />
              <StripIcon>
                <path d="M4 1H11V15H4Z" fill="#e4eefa" stroke="#2a5fb0" />
                <path d="M11 6H18V18H11Z" fill="#e4eefa" stroke="#2a5fb0" />
                <path d="M13 9H16M13 12H16M6 4H9M6 7H9" stroke="#2a5fb0" />
                <circle cx="5" cy="15" r="4" fill="#2aa02a" />
                <path d="M2.500 15H7.500M5 12.500V17.500" stroke="#fff" />
              </StripIcon>
              <div className="flex-1" />
              <DblChev />
            </Strip>
            <div className="flex-1 flex flex-col min-w-0 border-l border-[#b5b2ab]">
              <div className="h-[26px] shrink-0 flex items-center border-b border-[#b5b2ab] pl-[2px]">
                <span>View:</span>
                <span className="ml-[6px] w-[12px] h-[12px] rounded-full border border-[#8e8b85] bg-[#dcd9d4] flex items-center justify-center shrink-0">
                  <span className="w-[6px] h-[6px] rounded-full bg-[#555]" />
                </span>
                <span className="ml-[5px]">
                  <Ic className="w-[18px] h-[18px]">
                    <rect x="3" y="3" width="14" height="14" fill="#eee" stroke="#222" />
                    <path d="M6 0V20M10 0V20M14 0V20M0 6H20M0 10H20M0 14H20" stroke="#222" strokeDasharray="1.500 1.500" />
                    <circle cx="10" cy="10" r="4" fill="#2a6ac0" />
                  </Ic>
                </span>
                <span className="ml-[4px]">Implementation</span>
                <span className="ml-[5px] w-[12px] h-[12px] rounded-full border border-[#8e8b85] bg-[#f4f3f1] shrink-0" />
                <span className="ml-[6px]">
                  <Ic className="w-[17px] h-[17px]">
                    <rect x="1" y="1" width="18" height="18" fill="#3e78b8" />
                    <rect x="1" y="13" width="18" height="6" fill="#dbe5f2" />
                    <circle cx="13" cy="7" r="4" fill="#dde" stroke="#222" />
                  </Ic>
                </span>
                <span className="ml-[4px]">Simulation</span>
              </div>
              <div className="flex-1 flex min-h-0">
                <div className="flex-1 flex flex-col min-w-0 overflow-hidden">
                  <div className="h-[26px] shrink-0 flex">
                    <div className="w-[303px] h-full flex items-center pl-[4px] pt-px border-b-2 border-r border-[#b5b2ab] border-r-[#d5d2cc]">Hierarchy</div>
                  </div>
                  <div className="flex-1 bg-white overflow-hidden min-h-0">
                    <div className="h-[18px] flex items-center">
                      <DotLine ml="ml-[30px]" />
                      <DotLine ml="ml-[20px]" />
                      <DotH w="w-[8px]" />
                      <span className="ml-[4px]"><IcDocV /></span>
                      <span className="ml-[7px]">fulladder.v</span>
                    </div>
                    <div className="h-[18px] flex items-center">
                      <DotLine ml="ml-[30px]" />
                      <DotLine ml="ml-[20px]" />
                      <DotH w="w-[8px]" />
                      <span className="ml-[4px]"><IcDocV /></span>
                      <span className="ml-[7px]">halfadder.v</span>
                    </div>
                    <div className="h-[18px] w-[303px] flex items-center bg-[#8f8b7c] text-[#eeebe7] whitespace-nowrap overflow-hidden">
                      <span className="ml-[44px]"><IcDocV /></span>
                      <span className="ml-[23px]">arraymultiplier (arraymultiplier.v)</span>
                    </div>
                  </div>
                </div>
                <div className="h-[71px] mr-[2px]"><Scrollbar before="h-0" thumb="h-[28px]" after="flex-1" /></div>
              </div>
            </div>
          </div>

          {/* process status */}
          <div className="h-[39px] shrink-0 flex items-center border-b-2 border-[#b5b2ab] relative pt-[4px]">
            <div className="absolute left-1/2 -translate-x-1/2 top-[2px]"><SplitGrip /></div>
            <span className="w-[30px] flex justify-center shrink-0"><Ic className="w-[16px] h-[18px]"><path d="M4 1L17 10L4 19Z" fill="#14a02a" /></Ic></span>
            <span className="ml-[4px]">
              <Ic className="w-[18px] h-[18px]">
                <path d="M9 2A8 8 0 0 0 4 16L2 18H8V12L6 14A5 5 0 0 1 9 5Z" fill="#1e62b8" />
                <path d="M11 18A8 8 0 0 0 16 4L18 2H12V8L14 6A5 5 0 0 1 11 15Z" fill="#1e62b8" />
              </Ic>
            </span>
            <span className="ml-[9px]">No Processes Running</span>
          </div>

          {/* processes */}
          <div className="h-[74px] shrink-0 flex border-b-2 border-[#b5b2ab]">
            <Strip>
              <Sp h="h-[9px]" />
              <StripIcon>
                <rect x="7" y="3" width="10" height="14" fill="#eee" stroke="#222" />
                <path d="M0 3H6V8H0Z" fill="#dbe8f6" stroke="#1a62b8" />
                <path d="M3 10V18M1 15L3 18L5 15" stroke="#1a9030" fill="none" />
                <path d="M17 6H20M17 10H20M17 14H20M7 1V3M14 1V3M7 17V19M14 17V19" stroke="#222" />
              </StripIcon>
              <Sp h="h-[10px]" />
              <StripIcon gray>
                <rect x="7" y="3" width="10" height="14" fill="#eee" stroke="#222" />
                <path d="M0 3H6V8H0Z" fill="#eee" stroke="#333" />
                <path d="M0 11L6 17M6 11L0 17" stroke="#333" />
              </StripIcon>
              <div className="flex-1" />
              <DblChev />
            </Strip>
            <div className="flex-1 flex border-l border-[#b5b2ab] min-w-0">
              <div className="flex-1 flex flex-col min-w-0 overflow-hidden">
                <div className="h-[26px] shrink-0 flex items-center pl-[4px]">Processes: arraymultiplier</div>
                <div className="flex-1 bg-white min-h-0 overflow-hidden">
                  <div className="h-[18px] flex items-center bg-[#8f8b7c] text-[#eeebe7]">
                    <DotLine ml="ml-[9px]" />
                    <DotLine ml="ml-[20px]" />
                    <DotH w="w-[8px]" />
                    <span className="ml-[5px]"><IcSchem /></span>
                    <span className="ml-[23px]">View RTL Schematic</span>
                  </div>
                  <div className="h-[18px] flex items-center">
                    <DotLine ml="ml-[9px]" />
                    <DotLine ml="ml-[20px]" />
                    <DotH w="w-[8px]" />
                    <span className="ml-[5px]"><IcTech /></span>
                    <span className="ml-[23px]">View Technology Schematic</span>
                  </div>
                  <div className="h-[18px] flex items-center">
                    <DotLine ml="ml-[9px]" />
                    <span className="ml-[34px]"><IcTech /></span>
                    <span className="ml-[23px]">Check Syntax</span>
                  </div>
                </div>
              </div>
              <div className="h-[71px] mt-px mr-[2px]"><Scrollbar before="h-[6px]" thumb="h-[27px]" after="flex-1" /></div>
            </div>
          </div>

          {/* splitter */}
          <div className="h-[7px] shrink-0 flex items-center justify-center border-b-2 border-[#b5b2ab]">
            <SplitGrip />
          </div>

          {/* schematic */}
          <div className="h-[434px] shrink-0 flex">
            <CanvasStrip />
            <div className="w-[1800px] shrink-0 bg-black border-l border-[#b5b2ab]">
              <Schematic />
            </div>
            <div className="h-[433px]"><Scrollbar before="h-0" thumb="h-[357px]" after="flex-1" /></div>
          </div>

          {/* document tabs */}
          <div className="h-[2px] shrink-0 bg-[#b5b2ab]" />
          <div className="h-[25px] shrink-0 flex items-end">
            <DocTab w="w-[274px]" icon={<IcSigma />} label="Design Summary (Synthesized)" />
            <DocTab w="w-[225px]" icon={<IcDoc />} label="arraymultiplier.v" />
            <DocTab w="w-[224px]" icon={<IcDoc />} label="fulladder.v" />
            <DocTab w="w-[225px]" icon={<IcDoc />} label="halfadder.v" />
            <DocTab w="w-[226px]" icon={<IcStars />} label="arraymultiplier.ngr:1" />
            <DocTab w="w-[224px]" icon={<IcSchem />} label="arraymultiplier (RTL1)" active />
            <DocTab w="w-[224px]" icon={<IcSchem />} label="arraymultiplier (RTL2)" />
          </div>

          {/* splitter */}
          <div className="h-[8px] shrink-0 flex items-center justify-center border-b-2 border-[#d2cfc9]">
            <SplitGrip />
          </div>

          {/* view by category */}
          <div className="h-[18px] shrink-0 flex items-center justify-between pl-[4px] border-b-2 border-[#d2cfc9]">
            <span>View by Category</span>
            <PanelBtns />
          </div>
          <div className="h-[26px] shrink-0 flex items-center font-bold pb-[6px]">
            <span className="w-[921px] text-center">Design Objects of Top Level Block</span>
            <span className="flex-1 text-center pl-[7px]">Properties of Instance: arraymultiplier</span>
          </div>
          <div className="flex shrink-0 pl-[4px] pr-[5px]">
            <ListPanel w="w-[300px]" title="Instances" selected />
            <span className="w-[6px]" />
            <ListPanel w="w-[301px]" title="Pins" />
            <span className="w-[7px]" />
            <ListPanel w="w-[299px]" title="Signals" />
            <div className="w-[15px] flex items-center justify-center shrink-0">
              <span className="w-[3px] h-[40px] bg-[repeating-linear-gradient(180deg,#b2afa9_0,#b2afa9_1px,transparent_1px,transparent_2px)]" />
            </div>
            <div className="flex-1 min-w-0"><PropsPanel /></div>
          </div>

          {/* bottom tabs */}
          <div className="h-[26px] shrink-0 mt-[5px] flex items-start border-t-2 border-[#b5b2ab] relative">
            <BottomTab w="w-[93px]" icon={<IcDoc />} label="Console" />
            <BottomTab w="w-[80px]" icon={
              <span className="w-[17px] h-[17px] rounded-full bg-[#e02020] border border-[#901010] flex items-center justify-center">
                <svg viewBox="0 0 10 10" className="w-[8px] h-[8px]"><path d="M1 1L9 9M9 1L1 9" stroke="#fff" strokeWidth="2.400" /></svg>
              </span>
            } label="Errors" />
            <BottomTab w="w-[102px]" icon={
              <svg viewBox="0 0 18 20" className="w-[17px] h-[20px]"><path d="M9 1L17 19H1Z" fill="#f6dc36" stroke="#8a7a10" /><path d="M9 7V13M9 15V17" stroke="#000" strokeWidth="1.800" /></svg>
            } label="Warnings" />
            <BottomTab w="w-[170px]" icon={
              <svg viewBox="0 0 18 20" className="w-[17px] h-[20px]"><path d="M1 2H7L9 4H14V16H1Z" fill="#f4d758" stroke="#a38a20" /><path d="M5 9H9L10 19H3ZM10 9H14L16 19H10Z" fill="#222" /></svg>
            } label="Find in Files Results" />
            <BottomTab w="w-[155px]" icon={
              <svg viewBox="0 0 16 16" className="w-[15px] h-[15px]"><rect x=".5" y=".5" width="15" height="15" fill="#cfe0f6" stroke="#3a62b0" /><path d="M0 4.500H16M0 8H16M0 11.500H16M4 0V16M8 0V16M12 0V16" stroke="#3a62b0" /></svg>
            } label="View by Category" active />
          </div>

          {/* status */}
          <div className="flex-1 flex items-end justify-end pr-[3px] pb-[5px]">[10360,9224]</div>
        </div>
      </div>
    </div>
  );
}
